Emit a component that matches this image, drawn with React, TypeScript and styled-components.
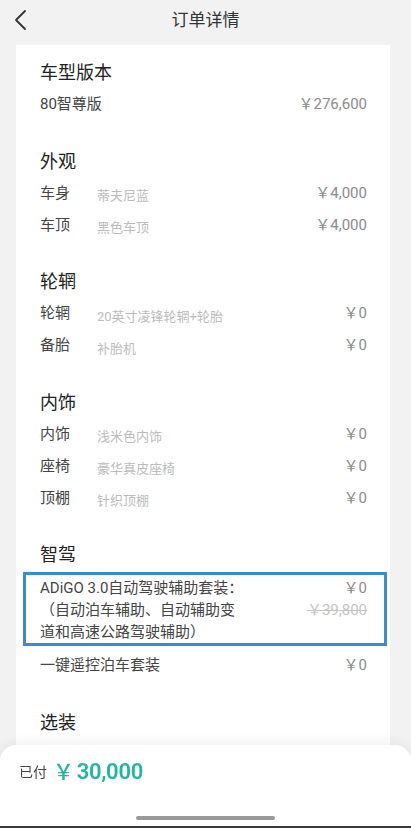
import React from "react";
import styled, { createGlobalStyle } from "styled-components";

const Global = createGlobalStyle`
  html, body { margin: 0; padding: 0; background: #f2f2f2; }
  body {
    font-family: "Roboto", "Noto Sans CJK SC", sans-serif;
    -webkit-font-smoothing: antialiased;
    overflow: hidden;
  }
  * { box-sizing: border-box; }
`;

const Page = styled.div`
  width: 411px;
  height: 828px;
  overflow: hidden;
  background: #f2f2f2;
  display: flex;
  flex-direction: column;
`;

const NavBar = styled.div`
  height: 40px;
  flex: none;
  display: flex;
  align-items: center;
  justify-content: center;
  position: relative;
`;

const BackButton = styled.div`
  position: absolute;
  left: 10px;
  top: 6px;
  width: 20px;
  height: 28px;
  display: flex;
  align-items: center;
  justify-content: center;
`;

const NavTitle = styled.div`
  font-size: 17px;
  color: #333;
  line-height: 24px;
`;

const Card = styled.div`
  flex: 1;
  margin: 5px 21px 0 16px;
  background: #fff;
  padding: 13px 23px 0 24px;
  display: flex;
  flex-direction: column;
`;

const Section = styled.div`
  display: flex;
  flex-direction: column;
  & + & { margin-top: 26.5px; }
`;

const SectionTitle = styled.div`
  height: 30px;
  line-height: 30px;
  font-size: 18px;
  color: #222;
`;

const Row = styled.div<{ $top?: number }>`
  height: 32px;
  display: flex;
  align-items: center;
  margin-top: ${(p) => p.$top ?? 0}px;
`;

const Label = styled.div`
  width: 57px;
  flex: none;
  font-size: 15px;
  color: #444;
  line-height: 20px;
`;

const Name = styled.div`
  flex: 1;
  font-size: 15px;
  color: #444;
  line-height: 20px;
`;

const Desc = styled.div`
  flex: 1;
  font-size: 13px;
  color: #bcbcbc;
  line-height: 18px;
  margin-top: 7px;
`;

const Price = styled.div<{ $strike?: boolean }>`
  font-size: 15px;
  line-height: 22px;
  color: ${(p) => (p.$strike ? "#c4c4c4" : "#8c8c8c")};
  text-decoration: ${(p) => (p.$strike ? "line-through" : "none")};
  text-align: right;
  white-space: nowrap;
`;

const Highlight = styled.div`
  margin: 2px -20px 0 -17px;
  border: 3px solid #3b8ad6;
  padding: 2px 17px 0 14px;
  display: flex;
  justify-content: space-between;
  align-items: flex-start;
`;

const PackageText = styled.div`
  width: 206px;
  font-size: 15px;
  line-height: 22px;
  color: #444;
`;

const PriceStack = styled.div`
  display: flex;
  flex-direction: column;
  align-items: flex-end;
`;

const BottomBar = styled.div`
  position: fixed;
  left: 0;
  right: 0;
  bottom: 0;
  height: 83px;
  background: #fff;
  border-radius: 16px 16px 0 0;
  box-shadow: 0 -3px 12px rgba(0, 0, 0, 0.06);
  display: flex;
  flex-direction: column;
  align-items: center;
  border-bottom: 2px solid #3a3a3a;
`;

const PaidRow = styled.div`
  align-self: stretch;
  height: 54px;
  padding-left: 19px;
  display: flex;
  align-items: center;
  gap: 6px;
`;

const PaidLabel = styled.span`
  font-size: 14px;
  color: #444;
  line-height: 20px;
`;

const PaidAmount = styled.span`
  font-size: 22px;
  font-weight: 600;
  letter-spacing: -0.3px;
  color: #23b69d;
  line-height: 28px;
  display: flex;
  align-items: center;
`;

const Yen = styled.span`
  font-size: 21px;
  margin-right: 3px;
  font-weight: 500;
`;

const HomeIndicator = styled.div`
  margin-top: 17px;
  width: 139px;
  height: 4px;
  border-radius: 2px;
  background: #9a9a9a;
`;

type Item = { label: string; desc?: string; price: string };
type Group = { title: string; items: Item[] };

const groups: Group[] = [
  { title: "外观", items: [
    { label: "车身", desc: "蒂夫尼蓝", price: "￥4,000" },
    { label: "车顶", desc: "黑色车顶", price: "￥4,000" },
  ] },
  { title: "轮辋", items: [
    { label: "轮辋", desc: "20英寸凌锋轮辋+轮胎", price: "￥0" },
    { label: "备胎", desc: "补胎机", price: "￥0" },
  ] },
  { title: "内饰", items: [
    { label: "内饰", desc: "浅米色内饰", price: "￥0" },
    { label: "座椅", desc: "豪华真皮座椅", price: "￥0" },
    { label: "顶棚", desc: "针织顶棚", price: "￥0" },
  ] },
];

export default function App() {
  return (
    <Page>
      <Global />
      <NavBar>
        <BackButton>
          <svg width="14" height="22" viewBox="0 0 14 22" fill="none">
            <polyline points="12,2 3,11 12,20" stroke="#333" strokeWidth="1.8" strokeLinecap="round" strokeLinejoin="round" />
          </svg>
        </BackButton>
        <NavTitle>订单详情</NavTitle>
      </NavBar>
      <Card>
        <Section>
          <SectionTitle>车型版本</SectionTitle>
          <Row>
            <Name>80智尊版</Name>
            <Price>￥276,600</Price>
          </Row>
        </Section>
        {groups.map((g) => (
          <Section key={g.title}>
            <SectionTitle>{g.title}</SectionTitle>
            {g.items.map((it) => (
              <Row key={it.label}>
                <Label>{it.label}</Label>
                <Desc>{it.desc}</Desc>
                <Price>{it.price}</Price>
              </Row>
            ))}
          </Section>
        ))}
        <Section>
          <SectionTitle>智驾</SectionTitle>
          <Highlight>
            <PackageText>ADiGO 3.0自动驾驶辅助套装：（自动泊车辅助、自动辅助变道和高速公路驾驶辅助）</PackageText>
            <PriceStack>
              <Price>￥0</Price>
              <Price $strike>￥39,800</Price>
            </PriceStack>
          </Highlight>
          <Row $top={3}>
            <Name>一键遥控泊车套装</Name>
            <Price>￥0</Price>
          </Row>
        </Section>
        <Section>
          <SectionTitle>选装</SectionTitle>
        </Section>
      </Card>
      <BottomBar>
        <PaidRow>
          <PaidLabel>已付</PaidLabel>
          <PaidAmount>
            <Yen>￥</Yen>30,000
          </PaidAmount>
        </PaidRow>
        <HomeIndicator />
      </BottomBar>
    </Page>
  );
}
